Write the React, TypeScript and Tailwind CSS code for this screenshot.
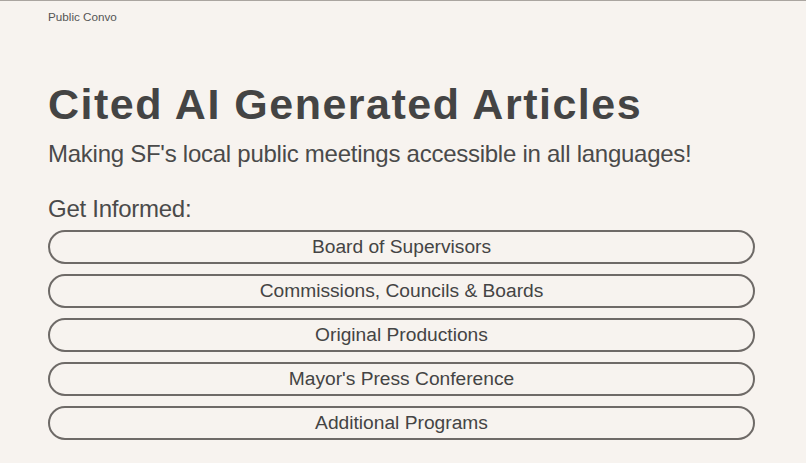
import React from 'react';

const LINKS = [
  'Board of Supervisors',
  'Commissions, Councils & Boards',
  'Original Productions',
  "Mayor's Press Conference",
  'Additional Programs',
];

export default function App() {
  return (
    <div
      className="min-h-[463px] w-full bg-[#f7f3ef] text-[#444444] border-t border-[#aaa5a0]"
      style={{ fontFamily: '"Liberation Sans", Arial, sans-serif' }}
    >
      <header className="pl-12 pt-[8px] text-[11.7px] leading-[16px] text-[#555]">Public Convo</header>

      <main className="pl-12 pr-[51px] pt-[55px]">
        <h1 className="text-[43px] leading-[48px] font-bold tracking-[1.5px]">Cited AI Generated Articles</h1>
        <p className="text-[24px] leading-[28px] mt-[12px] tracking-[-0.26px] text-[#4a4a4a]">
          Making SF's local public meetings accessible in all languages!
        </p>

        <h2 className="text-[24px] leading-[28px] mt-[27px] tracking-[-0.26px] text-[#4a4a4a]">Get Informed:</h2>
        <ul className="mt-[7px] flex flex-col gap-[10px]">
          {LINKS.map((label) => (
            <li key={label}>
              <a className="flex h-[34px] items-center justify-center rounded-full border-2 border-[#6e6a67] text-[19.2px] text-[#444]">
                {label}
              </a>
            </li>
          ))}
        </ul>
      </main>
    </div>
  );
}
